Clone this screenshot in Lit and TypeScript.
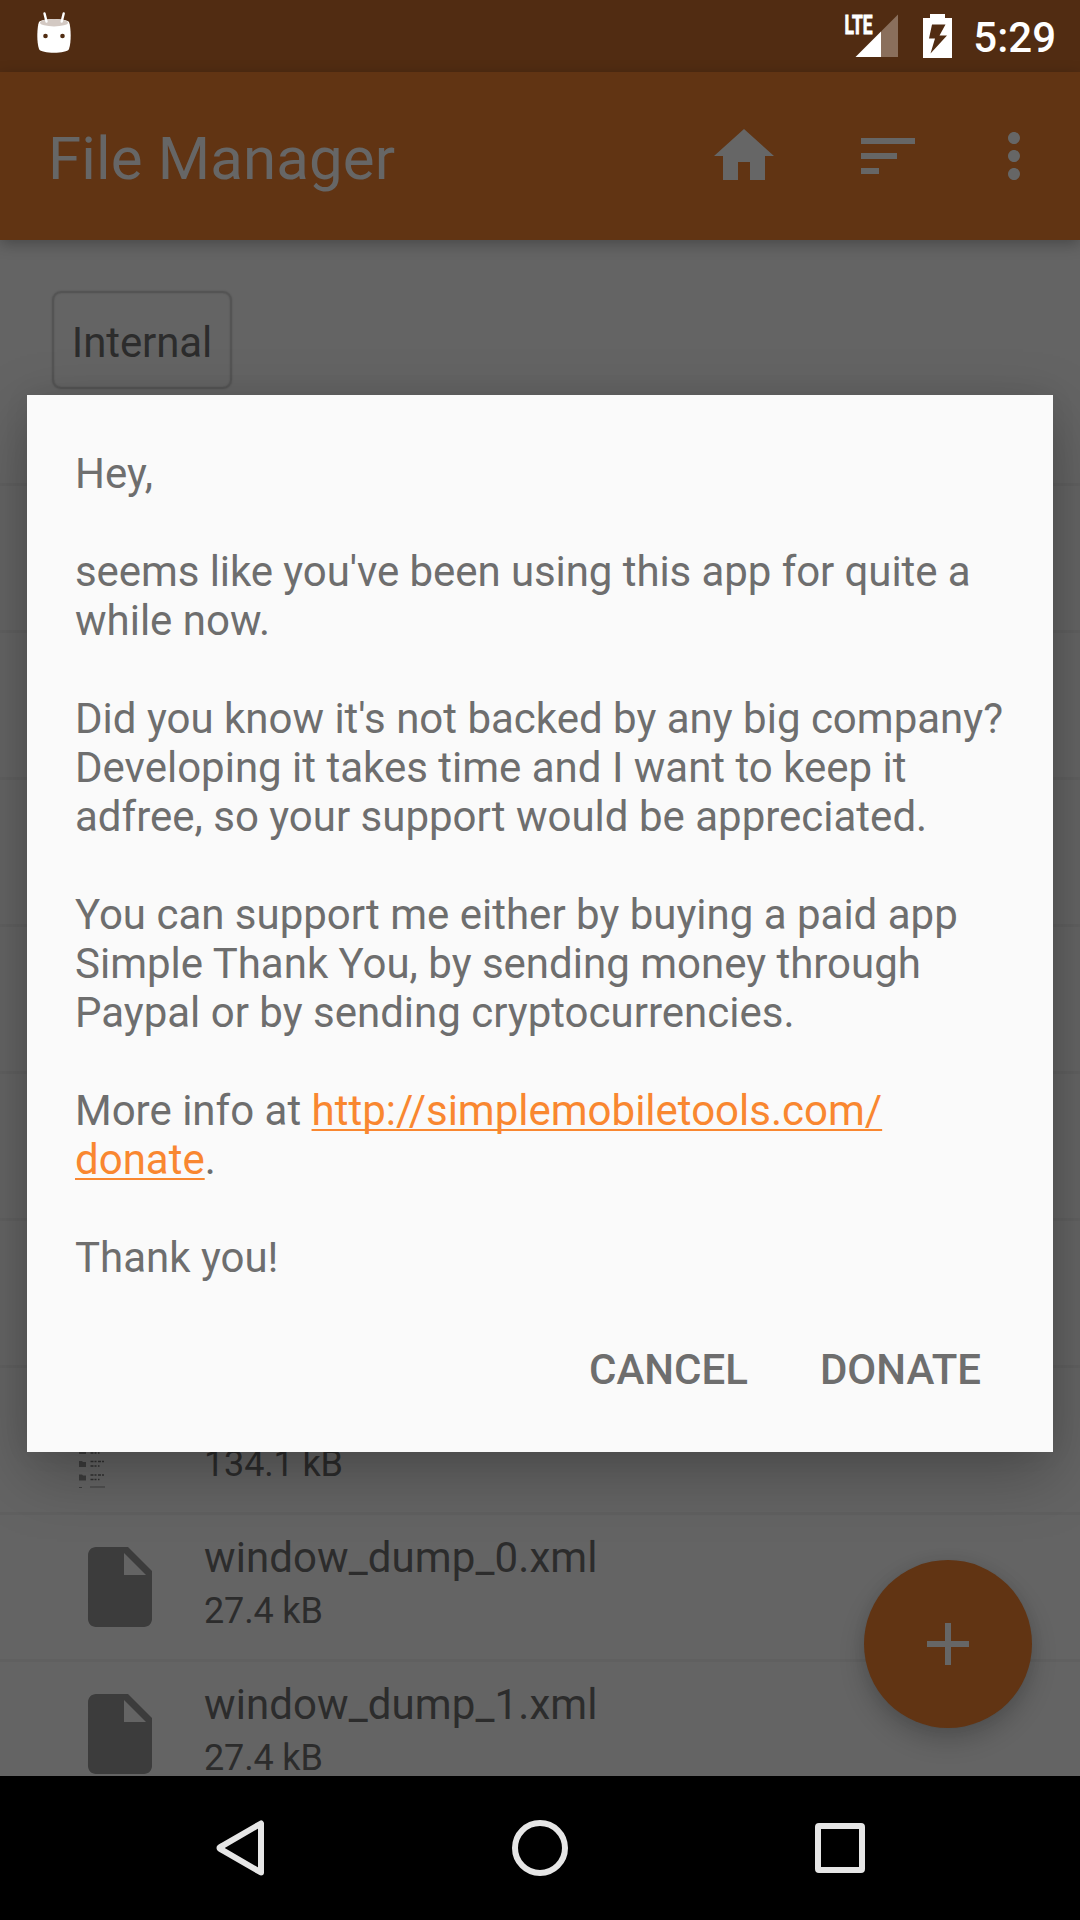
import { LitElement, html, css, svg } from "lit";
import { customElement } from "lit/decorators.js";

const files = [
  { name: "", size: "" },
  { name: "", size: "" },
  { name: "", size: "" },
  { name: "", size: "" },
  { name: "", size: "" },
  { name: "", size: "" },
  { name: "", size: "134.1 kB" },
  { name: "window_dump_0.xml", size: "27.4 kB" },
  { name: "window_dump_1.xml", size: "27.4 kB" },
];

const icon = (d: string, cls = "icon") =>
  html`<svg class=${cls} viewBox="0 0 24 24"><path d=${d} /></svg>`;

const HOME = "M10 20v-6h4v6h5v-8h3L12 3 2 12h3v8z";
const SORT = "M3 18h6v-2H3v2zM3 6v2h18V6H3zm0 7h12v-2H3v2z";
const MORE =
  "M12 8c1.1 0 2-.9 2-2s-.9-2-2-2-2 .9-2 2 .9 2 2 2zm0 2c-1.1 0-2 .9-2 2s.9 2 2 2 2-.9 2-2-.9-2-2-2zm0 6c-1.1 0-2 .9-2 2s.9 2 2 2 2-.9 2-2-.9-2-2-2z";
const FILE =
  "M6 2c-1.1 0-1.99.9-1.99 2L4 20c0 1.1.89 2 1.99 2H18c1.1 0 2-.9 2-2V8l-6-6H6zm7 7V3.5L18.5 9H13z";
const ADD = "M19 13h-6v6h-2v-6H5v-2h6V5h2v6h6v2z";

@customElement("app-root")
export class AppRoot extends LitElement {
  static styles = css`
    :host {
      display: block;
      position: relative;
      width: 1080px;
      height: 1920px;
      overflow: hidden;
      font-family: Roboto, "Liberation Sans", sans-serif;
      background: #646464;
    }
    .screen { display: flex; flex-direction: column; height: 1920px; }
    .status {
      height: 72px; box-sizing: border-box; flex: none; background: #512c12;
      display: flex; align-items: flex-start; padding: 0 24px 0 30px;
    }
    .status svg { display: block; flex: none; }
    .spacer { flex: 1; }
    .lte { font: 700 26px Roboto, sans-serif; fill: #fff; stroke: #fff; stroke-width: 0.9px; }
    .clock { color: #fff; font-size: 42px; font-weight: 500; line-height: 49px; margin-top: 13px; }
    .toolbar {
      height: 168px; box-sizing: border-box; flex: none; background: #613413; color: #666;
      display: flex; align-items: center; padding: 0 30px 0 48px; z-index: 1;
      box-shadow: 0 4px 14px rgba(0, 0, 0, 0.28);
    }
    .title { flex: 1; font-size: 60px; line-height: 70px; margin-top: 5px; letter-spacing: 0.12px; }
    .icon { width: 72px; height: 72px; fill: #666; display: block; }
    .gap72 { margin-right: 72px; }
    .gap54 { margin-right: 54px; }
    .body { height: 1536px; flex: none; overflow: hidden; }
    .crumbs { height: 246px; box-sizing: border-box; padding: 51px 0 0 52px; border-bottom: 3px solid #606060; display: flex; align-items: flex-start; }
    .crumb {
      box-sizing: border-box; width: 180px; height: 98px; border: 2px solid #545454; border-radius: 9px;
      box-shadow: 0 0 2px rgba(0, 0, 0, 0.18), inset 0 0 2px rgba(0, 0, 0, 0.18);
      display: flex; align-items: center; justify-content: center;
      font-size: 42px; line-height: 49px; padding-top: 5px; color: #2c2c2c; letter-spacing: -0.1px;
    }
    .row { height: 147px; box-sizing: border-box; border-bottom: 3px solid #606060; display: flex; padding-left: 72px; }
    .pic { width: 96px; height: 96px; margin: 24px 36px 0 0; flex: none; }
    .fileicon { width: 96px; height: 96px; fill: #3c3c3c; display: block; }
    .name { font-size: 42px; line-height: 49px; height: 49px; margin-top: 18px; color: #2c2c2c; letter-spacing: 0.1px; }
    .size { font-size: 36px; line-height: 42px; margin-top: 8px; color: #2c2c2c; letter-spacing: -0.15px; }
    .nav { flex: 1; background: #000; }
    .nav svg { display: block; }
    .fab {
      position: absolute; left: 864px; top: 1560px; width: 168px; height: 168px; border-radius: 50%;
      background: #613413; display: flex; align-items: center; justify-content: center;
      box-shadow: 0 12px 26px rgba(0, 0, 0, 0.2), 0 0 14px rgba(0, 0, 0, 0.06);
    }
    .dialog {
      position: absolute; left: 27px; top: 395px; width: 1026px; height: 1057px; box-sizing: border-box;
      background: #fafafa; color: #6e6e6e; padding: 54px 48px 0;
      box-shadow: 0 22px 60px rgba(0, 0, 0, 0.26), 0 0 26px rgba(0, 0, 0, 0.06);
      display: flex; flex-direction: column; z-index: 2;
    }
    .msg { font-size: 42px; line-height: 49px; white-space: pre; }
    .tight { letter-spacing: -0.075px; }
    .link { color: #f98730; text-decoration: underline; text-decoration-thickness: 2px; text-underline-offset: 4px; text-decoration-skip-ink: none; }
    .actions { display: flex; justify-content: flex-end; gap: 72px; padding-right: 24px; margin-top: 63px; font-size: 42px; font-weight: 500; line-height: 49px; }
  `;

  render() {
    return html`
      <div class="screen">
        <div class="status">
          <svg width="48" height="72" viewBox="30 0 48 72">
            <path d="M39 22C42 18 66 18 69 22C71 27 71.500 42 69 49C67 54 41 54 39 49C36.500 42 37 27 39 22Z" fill="#fff" />
            <ellipse cx="54" cy="22.700" rx="14" ry="3.700" fill="#d3c9c3" />
            <path d="M44.500 13.500L46.500 21.500M63.700 13.500L61.700 21.500" stroke="#fff" stroke-width="2.400" stroke-linecap="round" />
            <circle cx="45.500" cy="36" r="2.300" fill="#512c12" /><circle cx="62.500" cy="36" r="2.300" fill="#512c12" />
          </svg>
          <span class="spacer"></span>
          <svg width="133" height="72" viewBox="840 0 133 72">
            <text class="lte" x="844.500" y="33.500" textLength="28" lengthAdjust="spacingAndGlyphs">LTE</text>
            <path d="M881 31.500L898 14.500V57H881Z" fill="#8a6f5c" />
            <path d="M855.500 57L881 31.500V57Z" fill="#fff" />
            <path fill="#fff" fill-rule="evenodd" d="M930 14H945V18H952V58H923V18H930ZM932 24.500L929 38.500H935L930.500 53.500L947 35.500H939.500L945.500 24.500Z" />
          </svg>
          <span class="clock">5:29</span>
        </div>
        <div class="toolbar">
          <span class="title">File Manager</span>
          ${icon(HOME, "icon gap72")}${icon(SORT, "icon gap54")}${icon(MORE)}
        </div>
        <div class="body">
          <div class="crumbs"><span class="crumb">Internal</span></div>
          ${files.map(
            (f, i) => html`<div class="row">
              <div class="pic">${i > 6 ? icon(FILE, "fileicon") : i === 6 ? this.thumb() : ""}</div>
              <div><div class="name">${f.name}</div><div class="size">${f.size}</div></div>
            </div>`
          )}
        </div>
        <div class="nav">
          <svg width="1080" height="144" viewBox="0 1776 1080 144" fill="none" stroke="#e6e6e6" stroke-width="6" stroke-linejoin="round">
            <path d="M261 1823.500V1872.500L221.500 1849.700Q217.500 1848 221.500 1846.300Z" />
            <circle cx="540" cy="1848" r="25" />
            <rect x="818" y="1826" width="44" height="44" rx="1" />
          </svg>
        </div>
      </div>
      <div class="fab">${icon(ADD)}</div>
      <div class="dialog">
        <div class="msg">Hey,

<span class="tight">seems like you've been using this app for quite a</span>
while now.

Did you know it's not backed by any big company?
Developing it takes time and I want to keep it
adfree, so your support would be appreciated.

You can support me either by buying a paid app
Simple Thank You, by sending money through
Paypal or by sending cryptocurrencies.

More info at <span class="link">http://simplemobiletools.com/
donate</span>.

Thank you!</div>
        <div class="actions"><span>CANCEL</span><span>DONATE</span></div>
      </div>
    `;
  }

  private thumb() {
    const ys = [1448, 1461, 1474.5];
    return html`<svg class="fileicon" viewBox="72 1392 96 96">
      ${ys.map(
        (y) => svg`<path d=${`M79 ${y}h3l1 1h3v5h-7z`} />
          <path fill="none" stroke="#303030" stroke-width="1.6" stroke-dasharray="3 1 2 1.500" d=${`M90.500 ${y + 0.5}h14M90.500 ${y + 5}h9`} />`
      )}
      <path d="M79 1487h3v1h-3zM90 1486.500h15v1h-15z" />
    </svg>`;
  }
}
